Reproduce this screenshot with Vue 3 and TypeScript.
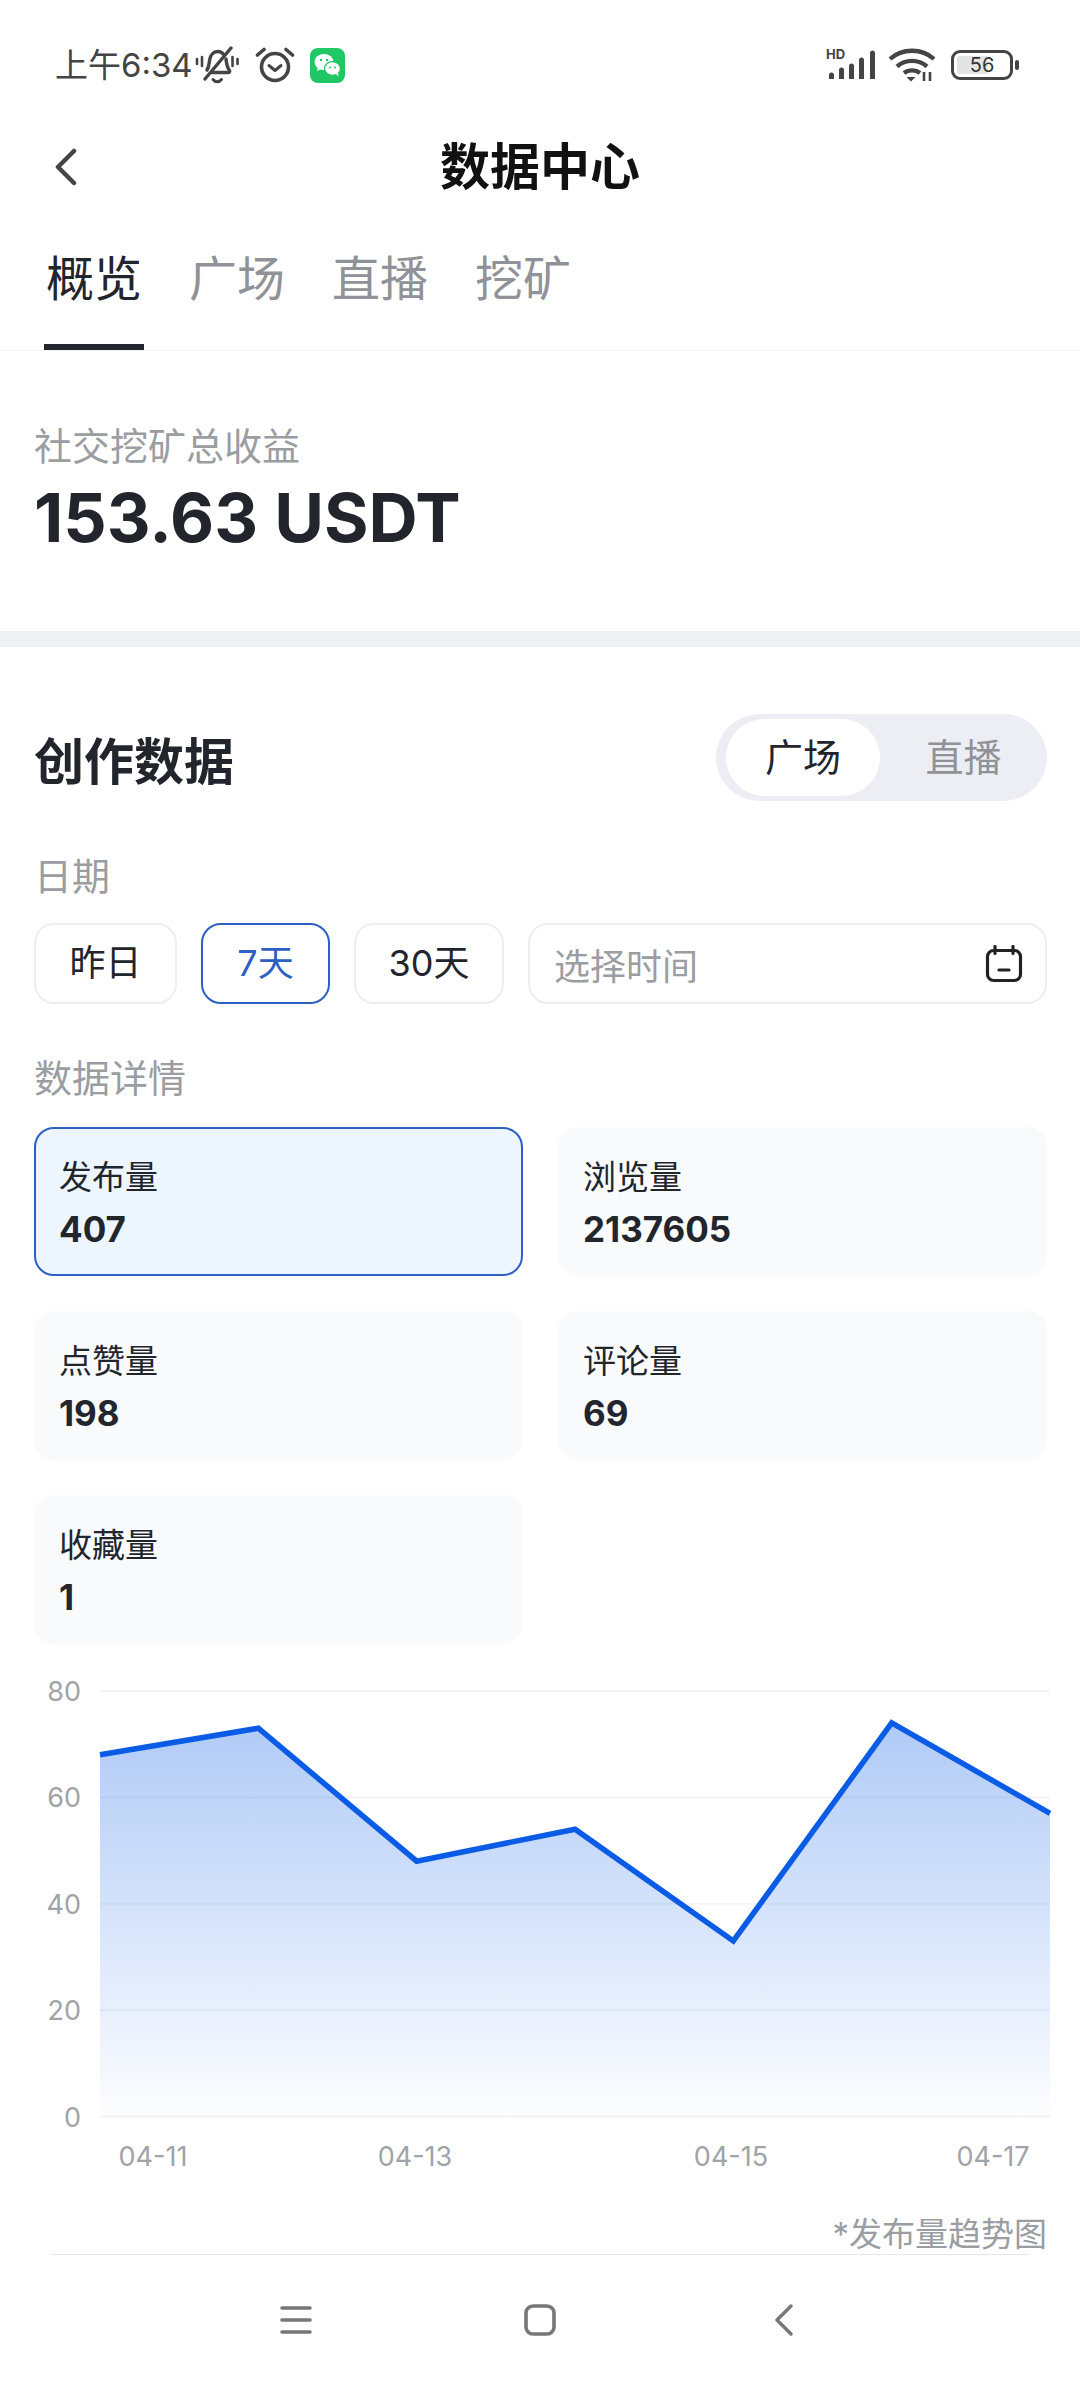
<template>
  <div class="page">
    <div class="status-bar">
      <div class="status-left">
        <span class="time">上午6:34</span>
        <svg class="ic-bell" width="44" height="38" viewBox="0 0 44 38" fill="none" stroke="#444" stroke-width="3.4" stroke-linecap="round">
          <path d="M12 24c2-3 2-6 2.600-10 .8-5 4-8.500 8-8.500 2.500 0 4.500 1 6 3M31 13c.4 4 .8 8 3.500 11.500.6 1-.2 2-1.500 2H17" />
          <path d="M36 2 10 33" />
          <path d="M18 33.500c2.500 3 6 3 8.500 0" stroke-width="3" />
          <path d="M7 11v9M2 13v5M37.500 11v9M42.500 13v5" stroke-width="2.600" />
        </svg>
        <svg class="ic-alarm" width="40" height="38" viewBox="0 0 40 38" fill="none" stroke="#444" stroke-linecap="round">
          <circle cx="20" cy="21" r="13.500" stroke-width="3.600" />
          <path d="M14 19.500l6 5 6-5" stroke-width="3" stroke-linejoin="round" />
          <path d="M2.500 9 9 3.500M37.500 9 31 3.500" stroke-width="3.600" />
        </svg>
        <svg class="ic-wechat" width="35" height="35" viewBox="0 0 35 35">
          <rect width="35" height="35" rx="8" fill="#1fc864" />
          <ellipse cx="14" cy="14" rx="9.500" ry="8" fill="#fff" />
          <path d="M8 19l-1 4 5-2.500z" fill="#fff" />
          <ellipse cx="22.500" cy="20.500" rx="8" ry="6.800" fill="#fff" stroke="#1fc864" stroke-width="1.300" />
          <path d="M26 26l2.500 2.500-.5-4z" fill="#fff" />
          <circle cx="11" cy="12" r="1.200" fill="#1fc864" />
          <circle cx="17" cy="12" r="1.200" fill="#1fc864" />
          <circle cx="20" cy="19.500" r="1" fill="#1fc864" />
          <circle cx="25" cy="19.500" r="1" fill="#1fc864" />
        </svg>
      </div>
      <div class="status-right">
        <svg class="ic-signal" width="52" height="34" viewBox="0 0 52 34" fill="#444">
          <text x="0" y="11.500" class="hd">HD</text>
          <path d="M3 28a2.500 2.500 0 0 1 5 0v4H3zM13 23a2.500 2.500 0 0 1 5 0v9h-5zM23 19a2.500 2.500 0 0 1 5 0v13h-5zM33 13a2.500 2.500 0 0 1 5 0v19h-5zM44 6a2.500 2.500 0 0 1 5 0v26h-5z" />
        </svg>
        <svg class="ic-wifi" width="48" height="34" viewBox="0 0 48 34" fill="none" stroke="#444" stroke-width="4.400">
          <path d="M2 11c12-11 32-11 44 0" />
          <path d="M9 18.500c8.500-7.500 21.500-7.500 30 0" />
          <path d="M16 25c4.500-3.500 11.500-3.500 16 0" />
          <path d="M18.500 29 23 33.500l4.500-4.500z" fill="#444" stroke="none" />
          <path d="M36 24v9M42 24v9" stroke-width="2.600" />
        </svg>
        <div class="battery">
          <div class="battery-body">
            <div class="battery-fill"></div>
            <span class="battery-num">56</span>
          </div>
          <div class="battery-nub"></div>
        </div>
      </div>
    </div>

    <div class="nav-row">
      <svg class="nav-back" width="24" height="38" viewBox="0 0 24 38" fill="none" stroke="#444" stroke-width="4.500" stroke-linecap="round" stroke-linejoin="round">
        <path d="M20 3 4 19l16 16" />
      </svg>
      <span class="nav-title">数据中心</span>
    </div>

    <div class="tabs">
      <div v-for="(t, i) in tabs" :key="t" class="tab" :class="{ active: i === 0 }">{{ t }}</div>
    </div>

    <div class="summary">
      <div class="muted-label">社交挖矿总收益</div>
      <div class="total">153.63 USDT</div>
    </div>

    <div class="band"></div>

    <div class="content">
      <div class="head-row">
        <div class="head-title">创作数据</div>
        <div class="toggle">
          <div class="toggle-item on">广场</div>
          <div class="toggle-item">直播</div>
        </div>
      </div>

      <div class="muted-label date-label">日期</div>
      <div class="date-row">
        <div v-for="d in dates" :key="d.text" class="date-btn" :class="{ sel: d.sel }" :style="{ width: d.w + 'px' }">{{ d.text }}</div>
        <div class="date-input">
          <span>选择时间</span>
          <svg width="38" height="38" viewBox="0 0 38 38" fill="none" stroke="#222" stroke-width="3.200" stroke-linecap="round">
            <rect x="2.500" y="5.500" width="33" height="30" rx="6" />
            <path d="M10 1.500v7M28 1.500v7M14 25h10" />
          </svg>
        </div>
      </div>

      <div class="muted-label detail-label">数据详情</div>
      <div class="cards">
        <div v-for="(c, i) in cards" :key="c.name" class="card" :class="{ sel: i === 0 }">
          <div class="card-name">{{ c.name }}</div>
          <div class="card-val">{{ c.value }}</div>
        </div>
      </div>
    </div>

    <svg class="chart" width="1080" height="560" viewBox="0 0 1080 560">
      <defs>
        <linearGradient id="areaFill" x1="0" y1="0" x2="0" y2="1">
          <stop offset="0" stop-color="#0a5ce6" stop-opacity="0.32" />
          <stop offset="1" stop-color="#0a5ce6" stop-opacity="0.01" />
        </linearGradient>
      </defs>
      <line v-for="t in yTicks" :key="t" x1="100" x2="1050" :y1="yOf(t)" :y2="yOf(t)" stroke="#f3f4f6" stroke-width="2" />
      <text v-for="t in yTicks" :key="'y' + t" x="81" :y="yOf(t) + 10" text-anchor="end" class="axis">{{ t }}</text>
      <path :d="areaPath" fill="url(#areaFill)" />
      <polyline :points="linePoints" fill="none" stroke="#0a5ce6" stroke-width="5.500" stroke-linejoin="miter" />
      <text v-for="l in xLabels" :key="l.text" :x="l.x" y="507" text-anchor="middle" class="axis">{{ l.text }}</text>
    </svg>

    <div class="note">*发布量趋势图</div>

    <div class="nav-bar">
      <div class="nav-ic">
        <svg width="32" height="28" viewBox="0 0 32 28" stroke="#777" stroke-width="3.600" stroke-linecap="round">
          <path d="M2 2h28M2 14h28M2 26h28" />
        </svg>
      </div>
      <div class="nav-ic">
        <svg width="32" height="32" viewBox="0 0 32 32" fill="none" stroke="#777" stroke-width="3.600">
          <rect x="2" y="2" width="28" height="28" rx="7" />
        </svg>
      </div>
      <div class="nav-ic">
        <svg width="20" height="32" viewBox="0 0 20 32" fill="none" stroke="#777" stroke-width="3.400" stroke-linecap="round" stroke-linejoin="round">
          <path d="M17 2 3 16l14 14" />
        </svg>
      </div>
    </div>
  </div>
</template>

<script setup lang="ts">
import { computed } from 'vue'

const tabs = ['概览', '广场', '直播', '挖矿']

const dates = [
  { text: '昨日', w: 143, sel: false },
  { text: '7天', w: 129, sel: true },
  { text: '30天', w: 150, sel: false },
]

const cards = [
  { name: '发布量', value: '407' },
  { name: '浏览量', value: '2137605' },
  { name: '点赞量', value: '198' },
  { name: '评论量', value: '69' },
  { name: '收藏量', value: '1' },
]

const values = [68, 73, 48, 54, 33, 74, 57]
const yTicks = [80, 60, 40, 20, 0]
const xLabels = [
  { text: '04-11', x: 153 },
  { text: '04-13', x: 415 },
  { text: '04-15', x: 731 },
  { text: '04-17', x: 993 },
]

// chart svg starts at page y=1660
const yOf = (v: number) => 32 + (80 - v) * (425.5 / 80)
const xOf = (i: number) => 100 + (i * 950) / 6

const linePoints = computed(() => values.map((v, i) => `${xOf(i)},${yOf(v)}`).join(' '))
const areaPath = computed(
  () => `M100,${yOf(0)} L` + values.map((v, i) => `${xOf(i)},${yOf(v)}`).join(' L') + ` L1050,${yOf(0)} Z`,
)
</script>

<style>
body { background: #fff; }
</style>

<style scoped>
.page {
  width: 1080px;
  height: 2400px;
  overflow: hidden;
  background: #fff;
  font-family: Inter, "Noto Sans CJK SC", sans-serif;
  color: #22252c;
}

.status-bar {
  height: 130px;
  padding: 0 61px 0 55px;
  box-sizing: border-box;
  display: flex;
  align-items: center;
  justify-content: space-between;
}
.status-left, .status-right { display: flex; align-items: center; }
.time { font-size: 33px; line-height: 40px; color: #444; width: 140px; }
.ic-alarm { margin-left: 16px; }
.ic-wechat { margin-left: 15px; }
.ic-signal { margin-top: -2px; }
.hd { font-family: Inter, sans-serif; font-size: 13px; font-weight: 700; }
.ic-wifi { margin-left: 10px; }
.battery { display: flex; align-items: center; margin-left: 15px; }
.battery-body {
  width: 62px;
  height: 30px;
  box-sizing: border-box;
  border: 3.500px solid #444;
  border-radius: 9px;
  position: relative;
  display: flex;
  align-items: center;
  justify-content: center;
}
.battery-fill {
  position: absolute;
  left: 3px;
  top: 3px;
  bottom: 3px;
  width: 31px;
  background: #e4e4e4;
  border-radius: 2px;
}
.battery-num { position: relative; font-size: 20px; line-height: 22px; color: #333; }
.battery-nub { width: 4px; height: 10px; margin-left: 2px; background: #444; border-radius: 2px; }

.nav-row {
  height: 74px;
  position: relative;
  display: flex;
  align-items: center;
  justify-content: center;
}
.nav-back { position: absolute; left: 54px; top: 18px; }
.nav-title { font-size: 50px; font-weight: 700; color: #111; line-height: 74px; }

.tabs {
  height: 147px;
  box-sizing: border-box;
  display: flex;
  padding-left: 44px;
  gap: 43px;
  border-bottom: 1px solid #f2f3f5;
}
.tab {
  width: 100px;
  height: 146px;
  box-sizing: border-box;
  padding-top: 45px;
  font-size: 48px;
  line-height: 60px;
  text-align: center;
  color: #8f9296;
}
.tab.active { color: #22252c; border-bottom: 6px solid #22252c; }

.summary { height: 280px; box-sizing: border-box; padding: 70px 34px 0; }
.muted-label { font-size: 38px; line-height: 50px; color: #9a9da1; }
.total { margin-top: 6px; font-size: 68px; line-height: 80px; font-weight: 700; color: #22252c; }

.band { height: 16px; background: #eef0f3; }

.content { padding: 67px 33px 0 34px; }
.head-row { display: flex; align-items: center; justify-content: space-between; height: 87px; }
.head-title { font-size: 50px; font-weight: 700; color: #22252c; }
.toggle {
  width: 331px;
  height: 87px;
  box-sizing: border-box;
  padding: 5px 0 5px 10px;
  display: flex;
  background: #eceef4;
  border-radius: 44px;
}
.toggle-item {
  font-size: 38px;
  line-height: 77px;
  text-align: center;
  color: #8f9296;
  flex: 1;
}
.toggle-item.on {
  flex: none;
  width: 154px;
  background: #fff;
  border-radius: 39px;
  color: #22252c;
}

.date-label { margin-top: 50px; }
.date-row { margin-top: 22px; display: flex; gap: 24px; height: 81px; }
.date-btn {
  box-sizing: border-box;
  border: 2px solid #eceef0;
  border-radius: 20px;
  font-size: 36px;
  line-height: 77px;
  text-align: center;
  color: #22252c;
}
.date-btn.sel { border-color: #2d5fc4; color: #2d5fc4; }
.date-input {
  flex: 1;
  box-sizing: border-box;
  border: 2px solid #eceef0;
  border-radius: 20px;
  padding: 0 22px 0 24px;
  display: flex;
  align-items: center;
  justify-content: space-between;
  font-size: 36px;
  color: #9a9da1;
}

.detail-label { margin-top: 49px; }
.cards {
  margin-top: 24px;
  display: grid;
  grid-template-columns: 1fr 1fr;
  column-gap: 35px;
  row-gap: 35px;
}
.card {
  height: 149px;
  box-sizing: border-box;
  border: 2px solid transparent;
  border-radius: 20px;
  background: #f8fafc;
  padding: 28px 0 0 23px;
}
.card.sel { border-color: #2d5fc4; background: #edf5ff; }
.card-name { font-size: 33px; line-height: 40px; color: #22252c; }
.card-val { margin-top: 12px; font-size: 35px; line-height: 40px; font-weight: 700; color: #22252c; }

.chart { display: block; margin-top: 15px; }
.axis { font-family: Inter, sans-serif; font-size: 27px; fill: #a0a3a7; }

.note {
  margin-top: -5px;
  height: 40px;
  padding-right: 33px;
  text-align: right;
  font-size: 33px;
  line-height: 40px;
  color: #9a9da1;
}

.nav-bar {
  margin: 0 50px;
  height: 130px;
  border-top: 1px solid #e6e7e9;
  box-sizing: border-box;
  display: flex;
  align-items: center;
  justify-content: center;
  gap: 184px;
}
.nav-ic { width: 60px; display: flex; justify-content: center; }
</style>
